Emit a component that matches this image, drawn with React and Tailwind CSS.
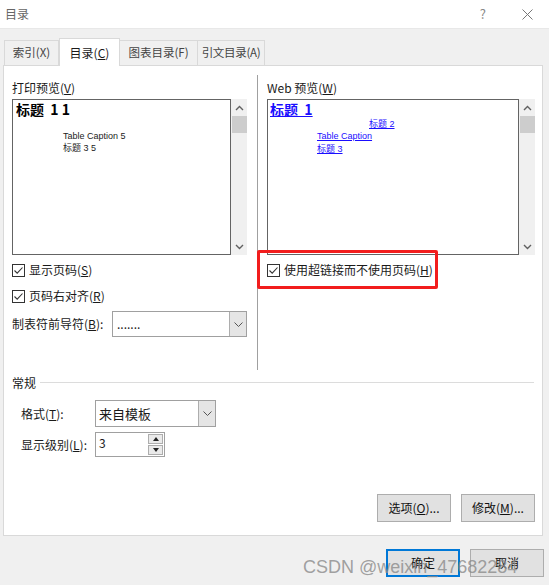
import React from "react";

const font = { fontFamily: '"Microsoft YaHei", "Noto Sans CJK SC", "Noto Sans", sans-serif' };

const Check = () => (
  <span className="w-[13px] h-[13px] border border-[#333] bg-white flex items-center justify-center shrink-0">
    <svg width="11" height="11" viewBox="0 0 11 11">
      <path d="M1.5 5.5 L4.2 8.2 L9.5 2.5" fill="none" stroke="#333" strokeWidth="1.1" />
    </svg>
  </span>
);

const Chevron = ({ down }) => (
  <svg width="9" height="6" viewBox="0 0 9 6">
    <path
      d={down ? "M1 1 L4.5 4.5 L8 1" : "M1 5 L4.5 1.5 L8 5"}
      fill="none"
      stroke="#606060"
      strokeWidth="1.4"
    />
  </svg>
);

const Scrollbar = () => (
  <div className="w-[16px] bg-[#f0f0f0] flex flex-col items-center">
    <div className="h-[17px] flex items-center justify-center">
      <Chevron />
    </div>
    <div className="w-[15px] h-[17px] bg-[#cdcdcd]" />
    <div className="flex-1" />
    <div className="h-[17px] flex items-center justify-center">
      <Chevron down />
    </div>
  </div>
);

const ComboArrow = () => (
  <div className="w-[17px] bg-[#e5e5e5] border-l border-[#adadad] flex items-center justify-center">
    <svg width="9" height="5" viewBox="0 0 9 5">
      <path d="M0.5 0.5 L4.5 4.5 L8.5 0.5" fill="none" stroke="#555" strokeWidth="1" />
    </svg>
  </div>
);

const Btn = ({ children, primary }) => (
  <div
    className={
      "w-[74px] h-[28px] bg-[#e1e1e1] flex items-center justify-center text-[12px] text-[#111] " +
      (primary ? "border-2 border-[#0078d7]" : "border border-[#adadad]")
    }
  >
    {children}
  </div>
);

export default function App() {
  return (
    <div style={font} className="relative w-[549px] h-[585px] bg-[#f0f0f0] overflow-hidden text-[#1a1a1a]">
      {/* title bar */}
      <div className="h-[29px] bg-white border-b border-[#e8e8e8] flex items-center pl-[5px]">
        <span className="text-[12px] text-[#666]">目录</span>
        <span className="ml-auto text-[13px] text-[#888]">?</span>
        <svg className="ml-[36px] mr-[16px]" width="11" height="11" viewBox="0 0 11 11">
          <path d="M0.5 0.5 L10.5 10.5 M10.5 0.5 L0.5 10.5" stroke="#777" strokeWidth="1" />
        </svg>
      </div>

      {/* tabs */}
      <div className="mt-[9px] pl-[4px] flex items-end h-[27px] relative z-10 text-[11.5px] whitespace-nowrap">
        <div className="w-[55px] h-[25px] border border-b-0 border-[#d9d9d9] flex items-center justify-center text-[#444]">
          索引(X)
        </div>
        <div className="w-[61px] h-[28px] -mb-px bg-white border border-b-0 border-[#d9d9d9] flex items-center justify-center text-[12px]">
          目录(<u>C</u>)
        </div>
        <div className="w-[78px] h-[25px] border border-b-0 border-l-0 border-[#d9d9d9] flex items-center justify-center text-[#444]">
          图表目录(F)
        </div>
        <div className="w-[67px] h-[25px] border border-b-0 border-l-0 border-[#d9d9d9] flex items-center justify-center text-[#444] tracking-[-0.3px]">
          引文目录(A)
        </div>
      </div>

      {/* panel */}
      <div className="ml-[3px] w-[540px] h-[471px] bg-white border border-[#d9d9d9] flex flex-col text-[12px]">
        <div className="flex h-[295px] mt-[9px]">
          {/* left column */}
          <div className="ml-[8px] w-[235px] pt-[4px] flex flex-col">
            <div className="h-[17px] leading-[17px]">
              打印预览(<u>V</u>)
            </div>
            <div className="mt-[3px] h-[156px] flex">
              <div className="w-[219px] border border-[#646464] bg-white pl-[3px] pt-[1px]" style={{ fontFamily: '"Liberation Sans", "Noto Sans CJK SC", sans-serif' }}>
                <div className="text-[14px] font-bold leading-[17px] text-black" style={font}>标题&nbsp; 1 1</div>
                <div className="ml-[47px] mt-[12px] text-[9px] leading-[12px] text-[#222]">Table Caption 5</div>
                <div className="ml-[47px] text-[9px] leading-[12px] text-[#222]">标题 3 5</div>
              </div>
              <Scrollbar />
            </div>
            <div className="mt-[7px] h-[16px] flex items-center gap-[4px]">
              <Check />
              <span>显示页码(<u>S</u>)</span>
            </div>
            <div className="mt-[10px] h-[16px] flex items-center gap-[4px]">
              <Check />
              <span>页码右对齐(<u>R</u>)</span>
            </div>
            <div className="mt-[7px] flex items-center">
              <span className="w-[100px]">
                制表符前导符(<u>B</u>):
              </span>
              <div className="w-[135px] h-[26px] border border-[#a0a0a0] flex">
                <div className="flex-1 pl-[4px] flex items-center text-[12px]">.......</div>
                <ComboArrow />
              </div>
            </div>
          </div>

          {/* divider */}
          <div className="ml-[10px] w-px bg-[#a0a0a0]" />

          {/* right column */}
          <div className="ml-[9px] w-[268px] pt-[4px] flex flex-col">
            <div className="h-[17px] leading-[17px]">
              Web 预览(<u>W</u>)
            </div>
            <div className="mt-[3px] h-[156px] flex">
              <div className="w-[252px] border border-[#646464] bg-white pl-[2px] pt-[1px] text-[#1a0dff]" style={{ fontFamily: '"Liberation Sans", "Noto Sans CJK SC", sans-serif' }}>
                <div className="text-[14px] font-bold leading-[17px] underline" style={font}>标题&nbsp; 1</div>
                <div className="ml-[99px] text-[9px] leading-[12px] underline">标题 2</div>
                <div className="ml-[47px] text-[9px] leading-[13px] underline">Table Caption</div>
                <div className="ml-[47px] text-[9px] leading-[12px] underline">标题 3</div>
              </div>
              <Scrollbar />
            </div>
            <div className="mt-[7px] h-[16px] flex items-center gap-[4px]">
              <Check />
              <span>使用超链接而不使用页码(<u>H</u>)</span>
            </div>
          </div>
        </div>

        {/* 常规 */}
        <div className="mt-[4px] h-[17px] ml-[8px] mr-[8px] flex items-center">
          <span>常规</span>
          <div className="ml-[4px] flex-1 h-px bg-[#dcdcdc]" />
        </div>
        <div className="mt-[9px] ml-[17px] flex items-center">
          <span className="w-[74px]">
            格式(<u>T</u>):
          </span>
          <div className="w-[121px] h-[27px] border border-[#a0a0a0] flex">
            <div className="flex-1 pl-[3px] flex items-center text-[13px]">来自模板</div>
            <ComboArrow />
          </div>
        </div>
        <div className="mt-[5px] ml-[17px] flex items-center">
          <span className="w-[74px]">
            显示级别(<u>L</u>):
          </span>
          <div className="w-[70px] h-[25px] border border-[#a0a0a0] flex">
            <div className="flex-1 pl-[3px] pt-[1px] text-[12px]">3</div>
            <div className="w-[17px] flex flex-col gap-[1px] p-[1px]">
              <div className="flex-1 bg-[#eaeaea] border border-[#adadad] flex items-center justify-center">
                <svg width="6" height="4" viewBox="0 0 6 4"><path d="M0 4 L3 0 L6 4 Z" fill="#222" /></svg>
              </div>
              <div className="flex-1 bg-[#eaeaea] border border-[#adadad] flex items-center justify-center">
                <svg width="6" height="4" viewBox="0 0 6 4"><path d="M0 0 L3 4 L6 0 Z" fill="#222" /></svg>
              </div>
            </div>
          </div>
        </div>
        <div className="mt-[37px] pr-[7px] flex justify-end gap-[10px]">
          <Btn>
            选项(<u>O</u>)...
          </Btn>
          <Btn>
            修改(<u>M</u>)...
          </Btn>
        </div>
      </div>

      {/* bottom buttons */}
      <div className="mt-[13px] pr-[5px] flex justify-end gap-[10px]">
        <Btn primary>确定</Btn>
        <Btn>取消</Btn>
      </div>

      {/* annotation box */}
      <div className="absolute left-[257px] top-[250px] w-[181px] h-[39px] border-[3px] border-[#f21d1d] rounded-[2px]" />

      {/* watermark */}
      <div
        className="absolute left-[303px] top-[554px] text-[18px] text-[#8a8a8a]/80 whitespace-nowrap"
        style={{ fontFamily: '"Liberation Sans", Arial, sans-serif' }}
      >
        CSDN @weixin_47682284
      </div>
    </div>
  );
}
